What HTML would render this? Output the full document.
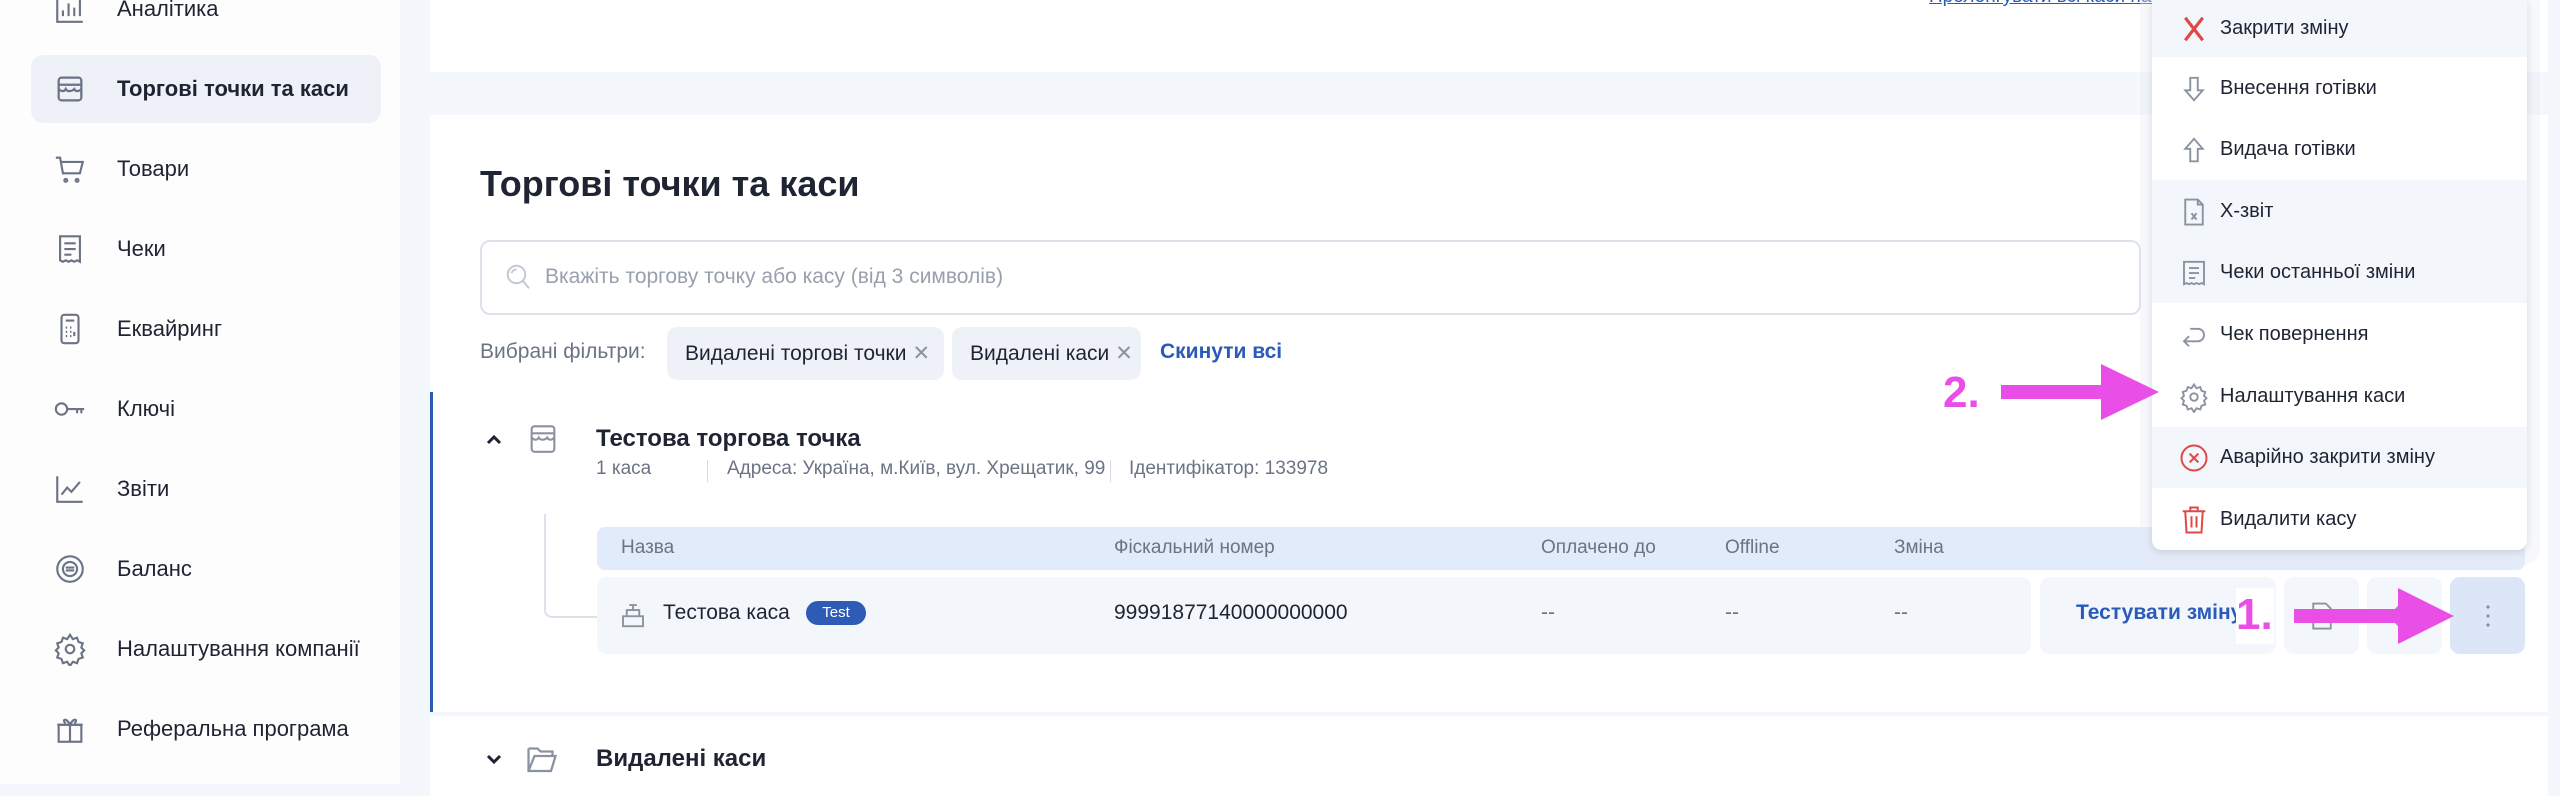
<!DOCTYPE html>
<html><head><meta charset="utf-8"><style>
*{box-sizing:border-box;margin:0;padding:0}
body{width:2560px;height:784px;overflow:hidden;background:#f4f7fb;font-family:"Liberation Sans","Noto Sans CJK SC",sans-serif;color:#1f2433;position:relative}
.a{position:absolute}
.side{left:0;top:0;width:400px;height:784px;background:#fdfdfe}
.nav{position:absolute;left:31px;width:350px;height:68px;display:flex;align-items:center;font-size:22px}
.nav svg{position:absolute;left:22px}
.nav span{position:absolute;left:86px}
.card{background:#fff}
.t{position:absolute;white-space:nowrap}
.g{color:#6b7385}
.chip{position:absolute;top:327px;height:53px;background:#eef2f8;border-radius:10px;font-size:21px;display:flex;align-items:center;padding-left:18px}
.mi{position:absolute;left:2152px;width:375px;height:61px;font-size:20px;display:flex;align-items:center}
.mi svg{position:absolute;left:27px}
.mi span{position:absolute;left:68px}
.sq{position:absolute;top:577px;width:75px;height:77px;background:#f3f6fb;border-radius:10px}
</style></head><body>
<div class="a side"></div>
<div class="nav" style="top:-25px"><svg width="34" height="34" viewBox="0 0 24 24" fill="none" stroke="#6b7385" stroke-width="1.5"><path d="M3 3v18h18M7 17v-4M11 17V8M15 17v-6M19 17V5"/></svg><span>Аналітика</span></div>
<div class="nav" style="top:55px;background:#eef2f8;border-radius:12px;font-weight:bold"><svg width="34" height="34" viewBox="0 0 24 24" fill="none" stroke="#6b7385" stroke-width="1.6"><rect x="4" y="4" width="16" height="16" rx="2"/><path d="M4 9h16M4 12c2 2 4 2 5 0c1 2 4 2 6 0c1 2 3 2 5 0"/></svg><span>Торгові точки та каси</span></div>
<div class="nav" style="top:135px"><svg width="34" height="34" viewBox="0 0 24 24" fill="none" stroke="#6b7385" stroke-width="1.5"><path d="M2 4h3l2 11h12l2-8H6"/><circle cx="9" cy="20" r="1"/><circle cx="17" cy="20" r="1"/></svg><span>Товари</span></div>
<div class="nav" style="top:215px"><svg width="34" height="34" viewBox="0 0 24 24" fill="none" stroke="#6b7385" stroke-width="1.5"><path d="M5 3h14v18l-2-1-2 1-2-1-2 1-2-1-2 1-2-1zM8 8h8M8 12h8M8 16h5"/></svg><span>Чеки</span></div>
<div class="nav" style="top:295px"><svg width="34" height="34" viewBox="0 0 24 24" fill="none" stroke="#6b7385" stroke-width="1.5"><rect x="6" y="2" width="12" height="20" rx="2"/><path d="M9 6h6M9 11h1M12 11h1M15 11h0M9 14h1M12 14h1M9 17h1M12 17h1M15 14v3"/></svg><span>Еквайринг</span></div>
<div class="nav" style="top:375px"><svg width="34" height="34" viewBox="0 0 24 24" fill="none" stroke="#6b7385" stroke-width="1.5"><circle cx="6" cy="12" r="4"/><path d="M10 12h12M17 12v3M20 12v3"/></svg><span>Ключі</span></div>
<div class="nav" style="top:455px"><svg width="34" height="34" viewBox="0 0 24 24" fill="none" stroke="#6b7385" stroke-width="1.5"><path d="M3 3v18h18M6 16l4-5 3 3 6-7"/></svg><span>Звіти</span></div>
<div class="nav" style="top:535px"><svg width="34" height="34" viewBox="0 0 24 24" fill="none" stroke="#6b7385" stroke-width="1.5"><circle cx="12" cy="12" r="9"/><circle cx="12" cy="12" r="5"/><path d="M9 11h6M9 13h6"/></svg><span>Баланс</span></div>
<div class="nav" style="top:615px"><svg width="34" height="34" viewBox="0 0 24 24" fill="none" stroke="#6b7385" stroke-width="1.5"><circle cx="12" cy="12" r="3"/><path d="M12 2l2 3 3-1 1 3 3 1-1 3 2 2-2 2 1 3-3 1-1 3-3-1-2 3-2-3-3 1-1-3-3-1 1-3-2-2 2-2-1-3 3-1 1-3 3 1z"/></svg><span>Налаштування компанії</span></div>
<div class="nav" style="top:695px"><svg width="34" height="34" viewBox="0 0 24 24" fill="none" stroke="#6b7385" stroke-width="1.5"><rect x="4" y="9" width="16" height="12"/><path d="M3 9h18M12 9v12M12 9C9 3 6 6 9 8M12 9c3-6 6-3 3-1"/></svg><span>Реферальна програма</span></div>

<div class="a card" style="left:430px;top:0;width:2118px;height:72px"></div>
<div class="t" style="left:1929px;top:-14px;font-size:19px;color:#2a5bb8;text-decoration:underline">Пролонгувати всі каси на рік</div>
<div class="a card" style="left:430px;top:115px;width:2118px;height:597px"></div>
<div class="a card" style="left:430px;top:716px;width:2118px;height:80px"></div>
<div class="a" style="left:430px;top:392px;width:3px;height:320px;background:#2a5bb8"></div>

<div class="t" style="left:480px;top:163px;font-size:36px;font-weight:bold">Торгові точки та каси</div>
<div class="a" style="left:480px;top:240px;width:1661px;height:75px;border:2px solid #dde2ea;border-radius:10px"></div>
<svg class="a" style="left:504px;top:261px" width="30" height="32" viewBox="0 0 24 24" fill="none" stroke="#c3c9d3" stroke-width="1.6"><circle cx="10" cy="10" r="7"/><path d="M15 15l5 6M6 9a4 4 0 0 1 4-3"/></svg>
<div class="t" style="left:545px;top:265px;font-size:21px;color:#98a0ad">Вкажіть торгову точку або касу (від 3 символів)</div>
<div class="t g" style="left:480px;top:340px;font-size:21px">Вибрані фільтри:</div>
<div class="chip" style="left:667px;width:277px">Видалені торгові точки <span style="color:#8a92a0;margin-left:6px">✕</span></div>
<div class="chip" style="left:952px;width:189px">Видалені каси <span style="color:#8a92a0;margin-left:6px">✕</span></div>
<div class="t" style="left:1160px;top:340px;font-size:21px;color:#2a5bb8;font-weight:bold">Скинути всі</div>

<svg class="a" style="left:484px;top:430px" width="20" height="18" viewBox="0 0 20 18" fill="none" stroke="#1f2433" stroke-width="3"><path d="M4 13l6-6 6 6"/></svg>
<svg class="a" style="left:526px;top:421px" width="34" height="36" viewBox="0 0 24 24" fill="none" stroke="#8a92a0" stroke-width="1.5"><rect x="4" y="3" width="16" height="18" rx="2"/><path d="M4 8h16M4 11c2 2 4 2 5 0c1 2 4 2 6 0c1 2 3 2 5 0"/></svg>
<div class="t" style="left:596px;top:425px;font-size:24px;font-weight:bold">Тестова торгова точка</div>
<div class="t g" style="left:596px;top:458px;font-size:19px">1 каса</div>
<div class="a" style="left:707px;top:460px;width:1px;height:22px;background:#d6dbe3"></div>
<div class="t g" style="left:727px;top:458px;font-size:19px">Адреса: Україна, м.Київ, вул. Хрещатик, 99</div>
<div class="a" style="left:1110px;top:460px;width:1px;height:22px;background:#d6dbe3"></div>
<div class="t g" style="left:1129px;top:458px;font-size:19px">Ідентифікатор: 133978</div>

<div class="a" style="left:544px;top:514px;width:54px;height:104px;border-left:2px solid #dde2ea;border-bottom:2px solid #dde2ea;border-bottom-left-radius:8px"></div>
<div class="a" style="left:597px;top:527px;width:1928px;height:43px;background:#e2ebfa;border-radius:8px"></div>
<div class="t g" style="left:621px;top:537px;font-size:19px">Назва</div>
<div class="t g" style="left:1114px;top:537px;font-size:19px">Фіскальний номер</div>
<div class="t g" style="left:1541px;top:537px;font-size:19px">Оплачено до</div>
<div class="t g" style="left:1725px;top:537px;font-size:19px">Offline</div>
<div class="t g" style="left:1894px;top:537px;font-size:19px">Зміна</div>

<div class="a" style="left:597px;top:577px;width:1434px;height:77px;background:#f3f6fb;border-radius:10px"></div>
<svg class="a" style="left:618px;top:599px" width="30" height="32" viewBox="0 0 24 24" fill="none" stroke="#8a92a0" stroke-width="1.5"><rect x="4" y="13" width="16" height="8"/><path d="M7 13V8h10v5M9 4h6M12 4v4"/></svg>
<div class="t" style="left:663px;top:601px;font-size:21px">Тестова каса</div>
<div class="a" style="left:806px;top:601px;width:60px;height:24px;background:#2d5bb5;border-radius:12px;color:#fff;font-size:15px;text-align:center;line-height:24px">Test</div>
<div class="t" style="left:1114px;top:601px;font-size:21px">99991877140000000000</div>
<div class="t" style="left:1541px;top:601px;font-size:21px;color:#6b7385">--</div>
<div class="t" style="left:1725px;top:601px;font-size:21px;color:#6b7385">--</div>
<div class="t" style="left:1894px;top:601px;font-size:21px;color:#6b7385">--</div>
<div class="a" style="left:2040px;top:577px;width:236px;height:77px;background:#f3f6fb;border-radius:10px;overflow:hidden"><div class="t" style="left:36px;top:24px;font-size:21px;font-weight:bold;color:#2a5bb8">Тестувати зміну</div></div>
<div class="sq" style="left:2284px"></div>
<svg class="a" style="left:2307px;top:601px" width="30" height="30" viewBox="0 0 24 24" fill="none" stroke="#8a92a0" stroke-width="1.5"><path d="M5 2h10l4 4v16H5z"/></svg>
<div class="sq" style="left:2367px"></div>
<svg class="a" style="left:2390px;top:601px" width="30" height="30" viewBox="0 0 24 24" fill="none" stroke="#8a92a0" stroke-width="1.5"><circle cx="12" cy="12" r="9"/></svg>
<div class="sq" style="left:2450px;background:#dce6f7"></div>
<svg class="a" style="left:2483px;top:602px" width="10" height="28" viewBox="0 0 10 28" fill="#8a92a0"><circle cx="5" cy="5" r="1.6"/><circle cx="5" cy="14" r="1.6"/><circle cx="5" cy="23" r="1.6"/></svg>

<svg class="a" style="left:484px;top:751px" width="20" height="18" viewBox="0 0 20 18" fill="none" stroke="#1f2433" stroke-width="3"><path d="M4 5l6 6 6-6"/></svg>
<svg class="a" style="left:524px;top:740px" width="36" height="38" viewBox="0 0 24 24" fill="none" stroke="#8a92a0" stroke-width="1.5"><path d="M3 5h6l2 2h8v3M3 5v15h15l3-10H7L3 20"/></svg>
<div class="t" style="left:596px;top:745px;font-size:24px;font-weight:bold">Видалені каси</div>

<!-- menu -->
<div class="a" style="left:2140px;top:-10px;width:400px;height:575px;background:rgba(230,235,244,.35);border-radius:16px"></div>
<div class="a" style="left:2152px;top:0;width:375px;height:550px;background:#fff;border-radius:0 0 10px 10px;box-shadow:0 2px 8px rgba(0,0,0,.12)"></div>
<div class="a" style="left:2152px;top:0;width:375px;height:57px;background:#f3f6fb"></div>
<div class="a" style="left:2152px;top:180px;width:375px;height:123px;background:#f3f6fb"></div>
<div class="a" style="left:2152px;top:427px;width:375px;height:61px;background:#f3f6fb"></div>
<div class="mi" style="top:0;height:57px"><svg width="30" height="30" viewBox="0 0 24 24" fill="none" stroke="#e04848" stroke-width="2.5"><path d="M5 3l14 18M19 3L5 21"/></svg><span>Закрити зміну</span></div>
<div class="mi" style="top:58px"><svg width="30" height="32" viewBox="0 0 24 24" fill="none" stroke="#8a92a0" stroke-width="1.5"><path d="M9 3h6v10h4l-7 8-7-8h4z"/></svg><span>Внесення готівки</span></div>
<div class="mi" style="top:119px"><svg width="30" height="32" viewBox="0 0 24 24" fill="none" stroke="#8a92a0" stroke-width="1.5"><path d="M9 21h6V11h4l-7-8-7 8h4z"/></svg><span>Видача готівки</span></div>
<div class="mi" style="top:181px"><svg width="30" height="32" viewBox="0 0 24 24" fill="none" stroke="#8a92a0" stroke-width="1.5"><path d="M5 2h10l4 4v16H5zM15 2v4h4M10 13l4 5M14 13l-4 5"/></svg><span>Х-звіт</span></div>
<div class="mi" style="top:242px"><svg width="30" height="32" viewBox="0 0 24 24" fill="none" stroke="#8a92a0" stroke-width="1.5"><path d="M4 3h16v18l-2-1-2 1-2-1-2 1-2-1-2 1-2-1-2 1zM8 8h8M8 12h8M8 16h5"/></svg><span>Чеки останньої зміни</span></div>
<div class="mi" style="top:304px"><svg width="30" height="30" viewBox="0 0 24 24" fill="none" stroke="#8a92a0" stroke-width="1.5"><path d="M8 21l-4-4 4-4M4 17h11a5 5 0 0 0 0-10H9"/></svg><span>Чек повернення</span></div>
<div class="mi" style="top:366px"><svg width="30" height="32" viewBox="0 0 24 24" fill="none" stroke="#8a92a0" stroke-width="1.5"><circle cx="12" cy="12" r="3"/><path d="M12 2l2 3 3-1 1 3 3 1-1 3 2 2-2 2 1 3-3 1-1 3-3-1-2 3-2-3-3 1-1-3-3-1 1-3-2-2 2-2-1-3 3-1 1-3 3 1z"/></svg><span>Налаштування каси</span></div>
<div class="mi" style="top:427px"><svg width="30" height="30" viewBox="0 0 24 24" fill="none" stroke="#e04848" stroke-width="1.6"><circle cx="12" cy="12" r="10"/><path d="M8.5 8.5l7 7M15.5 8.5l-7 7"/></svg><span>Аварійно закрити зміну</span></div>
<div class="mi" style="top:489px"><svg width="30" height="32" viewBox="0 0 24 24" fill="none" stroke="#e04848" stroke-width="1.6"><path d="M3 5h18M9 5V2h6v3M5 5l1 17h12l1-17M10 9v9M14 9v9"/></svg><span>Видалити касу</span></div>

<!-- arrows -->
<div class="t" style="left:1943px;top:368px;font-size:44px;font-weight:bold;color:#e94fe6">2.</div>
<svg class="a" style="left:1995px;top:360px" width="170" height="64" viewBox="0 0 170 64"><path d="M6 25h100V4l58 28-58 28V39H6z" fill="#e94fe6"/></svg>
<div class="a" style="left:2236px;top:588px;width:38px;height:56px;background:#fff"></div>
<div class="t" style="left:2236px;top:590px;font-size:44px;font-weight:bold;color:#e94fe6">1.</div>
<svg class="a" style="left:2290px;top:584px" width="166" height="64" viewBox="0 0 166 64"><path d="M4 25h104V4l56 28-56 28V39H4z" fill="#e94fe6"/></svg>
</body></html>
